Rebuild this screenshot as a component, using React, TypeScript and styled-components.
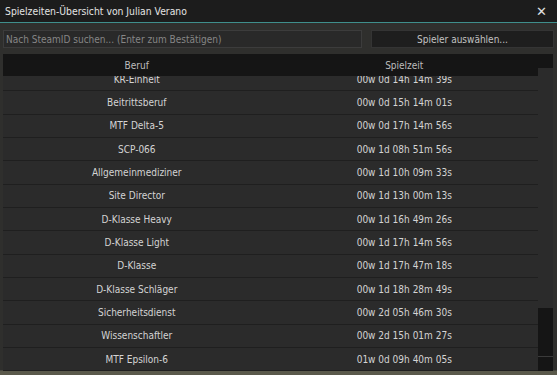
import React from "react";
import styled, { createGlobalStyle } from "styled-components";

const GlobalStyle = createGlobalStyle`
  html, body {
    margin: 0;
    padding: 0;
    background: #2e2e2c;
  }
  body {
    font-family: "DejaVu Sans Condensed", "DejaVu Sans", sans-serif;
  }
`;

const rows = [
  { beruf: "KR-Einheit", zeit: "00w 0d 14h 14m 39s" },
  { beruf: "Beitrittsberuf", zeit: "00w 0d 15h 14m 01s" },
  { beruf: "MTF Delta-5", zeit: "00w 0d 17h 14m 56s" },
  { beruf: "SCP-066", zeit: "00w 1d 08h 51m 56s" },
  { beruf: "Allgemeinmediziner", zeit: "00w 1d 10h 09m 33s" },
  { beruf: "Site Director", zeit: "00w 1d 13h 00m 13s" },
  { beruf: "D-Klasse Heavy", zeit: "00w 1d 16h 49m 26s" },
  { beruf: "D-Klasse Light", zeit: "00w 1d 17h 14m 56s" },
  { beruf: "D-Klasse", zeit: "00w 1d 17h 47m 18s" },
  { beruf: "D-Klasse Schläger", zeit: "00w 1d 18h 28m 49s" },
  { beruf: "Sicherheitsdienst", zeit: "00w 2d 05h 46m 30s" },
  { beruf: "Wissenschaftler", zeit: "00w 2d 15h 01m 27s" },
  { beruf: "MTF Epsilon-6", zeit: "01w 0d 09h 40m 05s" },
];

const Frame = styled.div`
  width: 557px;
  height: 375px;
  display: flex;
  flex-direction: column;
  overflow: hidden;
  background: linear-gradient(to bottom, #2f2f2d 0, #2f2f2d 370px, #5a594b 371px);
`;

const TitleBar = styled.div`
  height: 22px;
  flex-shrink: 0;
  display: flex;
  align-items: center;
  justify-content: space-between;
  padding: 0 10px 0 5px;
  background: #1c1c1c;
  border-bottom: 1px solid #3f8e8b;
  color: #e4e4e4;
  font-size: 10.3px;
`;

const Close = styled.span`
  color: #e0e0e0;
  font-family: "DejaVu Sans", sans-serif;
  font-size: 13px;
  font-weight: bold;
  line-height: 1;
`;

const Toolbar = styled.div`
  display: flex;
  gap: 9px;
  padding: 7px 3px 6px 3px;
`;

const Search = styled.div`
  width: 355px;
  height: 16px;
  display: flex;
  align-items: center;
  padding-left: 2px;
  background: #292929;
  border: 1px solid #3c3c3c;
  color: #868686;
  font-size: 10px;
`;

const PickButton = styled.div`
  flex: 1;
  height: 16px;
  display: flex;
  align-items: center;
  justify-content: center;
  background: #1e1e1e;
  border: 1px solid #343434;
  color: #c2c2c2;
  font-size: 10px;
`;

const Table = styled.div`
  display: grid;
  grid-template-columns: 535px 15px;
  grid-template-rows: 14px 8px 295px;
  margin: 0 4px 0 3px;
`;

const Header = styled.div`
  grid-column: 1;
  grid-row: 1 / span 2;
  display: grid;
  grid-template-columns: 1fr 1fr;
  align-items: center;
  background: #151515;
  color: #bdbdbd;
  font-size: 10px;
  text-align: center;
`;

const HeaderCorner = styled.div`
  grid-column: 2;
  grid-row: 1;
  background: #151515;
`;

const Body = styled.div`
  grid-column: 1;
  grid-row: 3;
  overflow: hidden;
`;

const List = styled.div<{ $offset: number }>`
  margin-top: ${(p) => -p.$offset}px;
`;

const Row = styled.div`
  height: 22.33px;
  display: grid;
  grid-template-columns: 1fr 1fr;
  align-items: center;
  text-align: center;
  background: #2b2b2b;
  border-bottom: 1px solid #1f1f1f;
  color: #d4d4d4;
  font-size: 10px;
`;

const Scrollbar = styled.div`
  grid-column: 2;
  grid-row: 2 / span 2;
  display: flex;
  flex-direction: column;
  background: #2b2b2b;
`;

const Track = styled.div`
  flex: 1;
`;

const Thumb = styled.div`
  height: 48px;
  background: #151515;
  border-bottom: 1px solid #3a3a3a;
`;

const StepButton = styled.div`
  height: 14px;
  background: #151515;
`;

export default function App() {
  return (
    <>
      <GlobalStyle />
      <Frame>
        <TitleBar>
          <span>Spielzeiten-Übersicht von Julian Verano</span>
          <Close>✕</Close>
        </TitleBar>
        <Toolbar>
          <Search>Nach SteamID suchen... (Enter zum Bestätigen)</Search>
          <PickButton>Spieler auswählen...</PickButton>
        </Toolbar>
        <Table>
          <Header>
            <span>Beruf</span>
            <span>Spielzeit</span>
          </Header>
          <HeaderCorner />
          <Body>
            <List $offset={8}>
              {rows.map((r) => (
                <Row key={r.beruf}>
                  <span>{r.beruf}</span>
                  <span>{r.zeit}</span>
                </Row>
              ))}
            </List>
          </Body>
          <Scrollbar>
            <Track />
            <Thumb />
            <StepButton />
          </Scrollbar>
        </Table>
      </Frame>
    </>
  );
}
